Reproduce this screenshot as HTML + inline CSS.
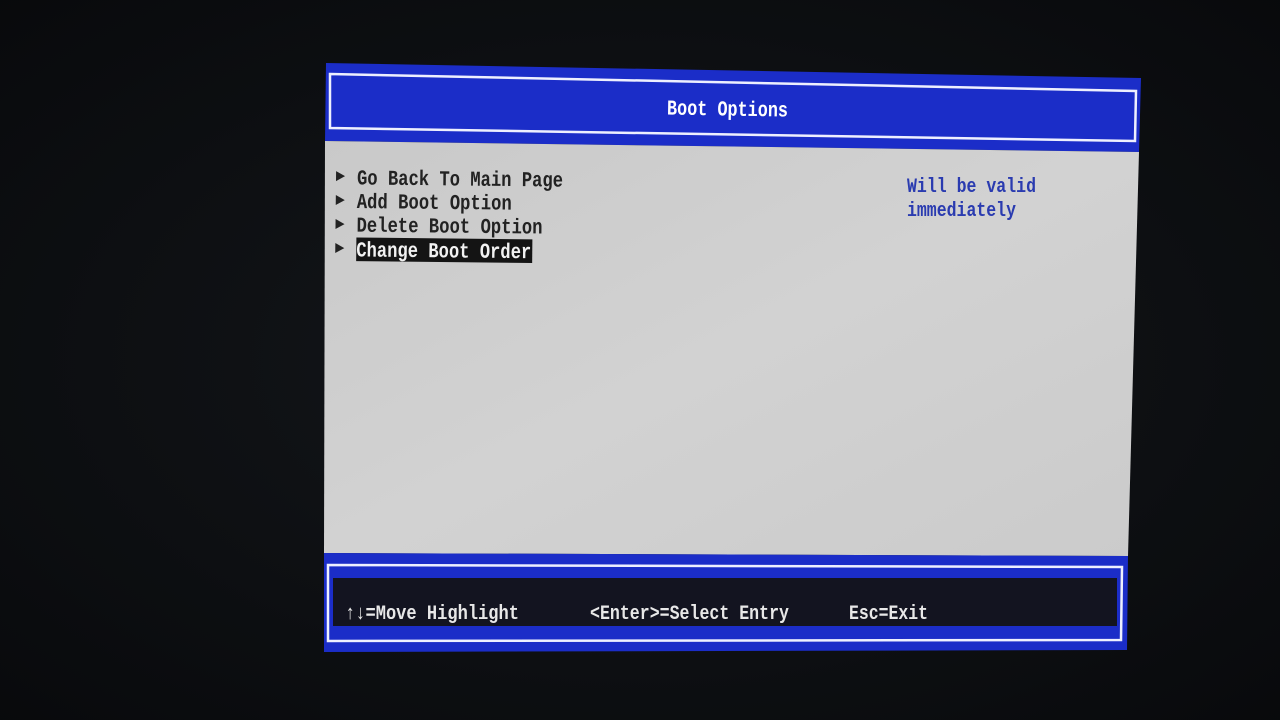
<!DOCTYPE html>
<html><head><meta charset="utf-8"><style>
html,body{margin:0;padding:0;background:#0c0e11;}
svg{display:block}
text{font-family:"Liberation Mono",monospace;font-weight:bold;}
</style></head><body>
<svg width="1280" height="720" viewBox="0 0 1280 720" xmlns="http://www.w3.org/2000/svg">
<defs>
<radialGradient id="bg" cx="0.5" cy="0.5" r="0.8">
<stop offset="0" stop-color="#14171b"/><stop offset="1" stop-color="#07080a"/>
</radialGradient>
<linearGradient id="gr" x1="0" y1="0" x2="1" y2="1">
<stop offset="0" stop-color="#c9c9c9"/><stop offset="0.5" stop-color="#d2d2d2"/><stop offset="1" stop-color="#cbcbcb"/>
</linearGradient>
</defs>
<rect width="1280" height="720" fill="url(#bg)"/>
<!-- header -->
<polygon points="326,63 1141,78 1139,152 325,141" fill="#1b2dc8"/>
<polygon points="330,74 1136,91 1135,141 330,128" fill="none" stroke="#eef0ff" stroke-width="2.5"/>
<g transform="rotate(1 727 110)">
<text x="667" y="114" fill="#ffffff" font-size="18" textLength="121" lengthAdjust="spacingAndGlyphs" transform="translate(0 -19) scale(1 1.18)">Boot Options</text>
</g>
<!-- body -->
<polygon points="325,141 1139,152 1128,556 324,553" fill="url(#gr)"/>
<g transform="rotate(0.6 330 180)" font-size="18" fill="#222">
<g transform="translate(0 -33) scale(1 1.18)">
<text x="357" y="184" font-weight="normal" textLength="206" lengthAdjust="spacingAndGlyphs">Go Back To Main Page</text>
<text x="357" y="204" font-weight="normal" textLength="155" lengthAdjust="spacingAndGlyphs">Add Boot Option</text>
<text x="357" y="224" font-weight="normal" textLength="186" lengthAdjust="spacingAndGlyphs">Delete Boot Option</text>
<rect x="357" y="229" width="176" height="20" fill="#141414"/>
<text x="357" y="245" fill="#f2f2f2" textLength="175" lengthAdjust="spacingAndGlyphs">Change Boot Order</text>
</g>
<polygon points="336,171 336,181 345,176" fill="#222"/>
<polygon points="336,195 336,205 345,200" fill="#222"/>
<polygon points="336,219 336,229 345,224" fill="#222"/>
<polygon points="336,243 336,253 345,248" fill="#222"/>
</g>
<g font-size="17" fill="#2a3bb0" font-weight="normal" transform="translate(0 -32) scale(1 1.18)">
<text x="907" y="190" font-weight="normal" textLength="129" lengthAdjust="spacingAndGlyphs">Will be valid</text>
<text x="907" y="210" font-weight="normal" textLength="109" lengthAdjust="spacingAndGlyphs">immediately</text>
</g>
<!-- footer -->
<polygon points="324,553 1128,556 1127,650 324,652" fill="#1b2dc8"/>
<polygon points="333,578 1117,578 1117,626 333,626" fill="#131420"/>
<polygon points="328,565 1122,567 1121,640 328,641" fill="none" stroke="#eef0ff" stroke-width="2.5"/>
<g font-size="17" fill="#e8e8e8" transform="translate(0 -103) scale(1 1.18)">
<text x="345" y="612" textLength="174" lengthAdjust="spacingAndGlyphs">↑↓=Move Highlight</text>
<text x="590" y="612" textLength="199" lengthAdjust="spacingAndGlyphs">&lt;Enter&gt;=Select Entry</text>
<text x="849" y="612" textLength="79" lengthAdjust="spacingAndGlyphs">Esc=Exit</text>
</g>
</svg>
</body></html>
